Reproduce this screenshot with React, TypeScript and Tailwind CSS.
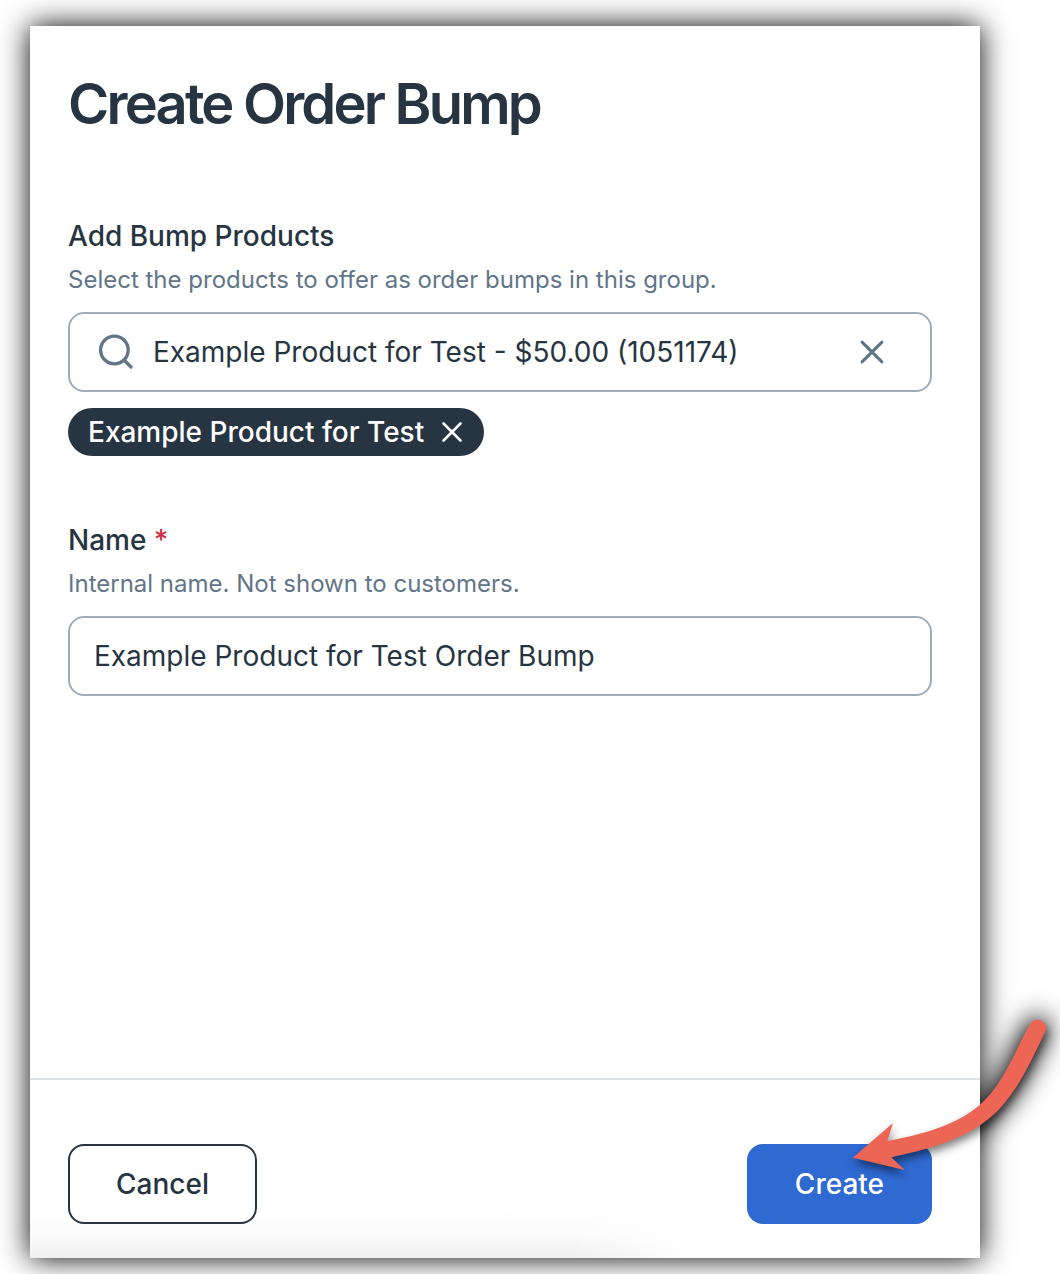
import { useState } from "react";

const arrowPath =
  "M12.7 167.7 L53 133 L47.3 151 C91 143 122 132 143 112 C164 92 176 59 190 34 A8.6 8.6 0 1 1 205 42.6 C196 60 183 92 163 115 C137 145 99 157 51.3 167.3 L64.7 180 Z";

function SearchIcon() {
  return (
    <svg
      className="h-10 w-10 shrink-0 text-[#627588]"
      viewBox="0 0 40 40"
      fill="none"
      stroke="currentColor"
      strokeWidth="3.3"
      strokeLinecap="round"
      aria-hidden="true"
    >
      <circle cx="18.4" cy="18" r="13.8"></circle>
      <path d="M28.5 28.5 L35 35"></path>
    </svg>
  );
}

function CloseIcon({ className }: { className: string }) {
  return (
    <svg
      className={className}
      viewBox="0 0 24 24"
      fill="none"
      stroke="currentColor"
      strokeWidth="2.6"
      strokeLinecap="round"
      aria-hidden="true"
    >
      <path d="M3.5 3.5 L20.5 20.5 M20.5 3.5 L3.5 20.5"></path>
    </svg>
  );
}

// Pointer that sits on the corner of the Create button
function Arrow() {
  return (
    <>
      <svg
        className="pointer-events-none absolute -top-[154px] -right-32 -z-10 h-[200px] w-[220px] overflow-visible blur-[13px]"
        viewBox="0 0 220 200"
        aria-hidden="true"
      >
        <path d={arrowPath} fill="#000" stroke="#000" strokeWidth="6"></path>
      </svg>
      <svg
        className="pointer-events-none absolute -top-[154px] -right-32 h-[200px] w-[220px] overflow-visible drop-shadow-[1px_5px_4px_rgba(0,0,0,0.5)]"
        viewBox="0 0 220 200"
        aria-hidden="true"
      >
        <path d={arrowPath} fill="#ed6655"></path>
      </svg>
    </>
  );
}

export default function App() {
  const [search, setSearch] = useState(
    "Example Product for Test - $50.00 (1051174)"
  );
  const [products, setProducts] = useState(["Example Product for Test"]);
  const [name, setName] = useState("Example Product for Test Order Bump");

  const removeProduct = (product: string) => {
    setProducts(products.filter((p) => p !== product));
  };

  return (
    <div className="isolate flex min-h-screen w-full overflow-hidden bg-white pt-[26px] pr-20 pb-4 pl-[30px] font-['Inter',sans-serif] text-[28px] leading-10 text-[#273441]">
      <form
        onSubmit={(e) => e.preventDefault()}
        className="flex flex-1 flex-col bg-white shadow-[0_0_28px_#000]"
      >
        <div className="flex flex-1 flex-col pt-[46px] pr-12 pb-16 pl-[38px]">
          <h1 className="text-[56px] leading-16 font-semibold tracking-tighter">
            Create Order Bump
          </h1>

          <div className="mt-20 flex flex-col">
            <label htmlFor="product-search" className="font-medium">
              Add Bump Products
            </label>
            <p className="mt-2 text-2xl text-[#627588]">
              Select the products to offer as order bumps in this group.
            </p>
            <div className="mt-4 flex h-20 items-center gap-[17px] rounded-2xl border-2 border-[#9facb9] pr-[44px] pl-[26px]">
              <SearchIcon></SearchIcon>
              <input
                id="product-search"
                type="text"
                value={search}
                onChange={(e) => setSearch(e.target.value)}
                className="min-w-0 flex-1 outline-none"
              ></input>
              <button
                type="button"
                aria-label="Clear search"
                onClick={() => setSearch("")}
                className="cursor-pointer text-[#627588]"
              >
                <CloseIcon className="h-7 w-7"></CloseIcon>
              </button>
            </div>
            <div className="mt-4 flex flex-wrap gap-2">
              {products.map((product) => (
                <span
                  key={product}
                  className="flex h-12 items-center gap-4 rounded-full bg-[#273441] px-5 font-medium text-white"
                >
                  {product}
                  <button
                    type="button"
                    aria-label={"Remove " + product}
                    onClick={() => removeProduct(product)}
                    className="cursor-pointer"
                  >
                    <CloseIcon className="h-6 w-6"></CloseIcon>
                  </button>
                </span>
              ))}
            </div>
          </div>

          <div className="mt-16 flex flex-col">
            <label htmlFor="bump-name" className="font-medium">
              Name <span className="text-[#cf2c44]">*</span>
            </label>
            <p className="mt-2 text-2xl text-[#627588]">
              Internal name. Not shown to customers.
            </p>
            <input
              id="bump-name"
              type="text"
              required
              value={name}
              onChange={(e) => setName(e.target.value)}
              className="mt-4 h-20 rounded-2xl border-2 border-[#9facb9] px-6 outline-none"
            ></input>
          </div>
        </div>

        <div className="flex items-center justify-between border-t-2 border-[#dce1e6] bg-[linear-gradient(to_right,transparent_57%,white_70%),linear-gradient(to_top,#efefef,#fafafa_20px,white_52px)] pt-16 pr-12 pb-[34px] pl-[38px]">
          <button
            type="button"
            className="h-20 cursor-pointer rounded-2xl border-2 border-[#273441] px-[46px] font-medium"
          >
            Cancel
          </button>
          <div className="relative">
            <button
              type="submit"
              className="h-20 cursor-pointer rounded-2xl bg-[#2f6ad3] px-12 font-medium text-white"
            >
              Create
            </button>
            <Arrow></Arrow>
          </div>
        </div>
      </form>
    </div>
  );
}
